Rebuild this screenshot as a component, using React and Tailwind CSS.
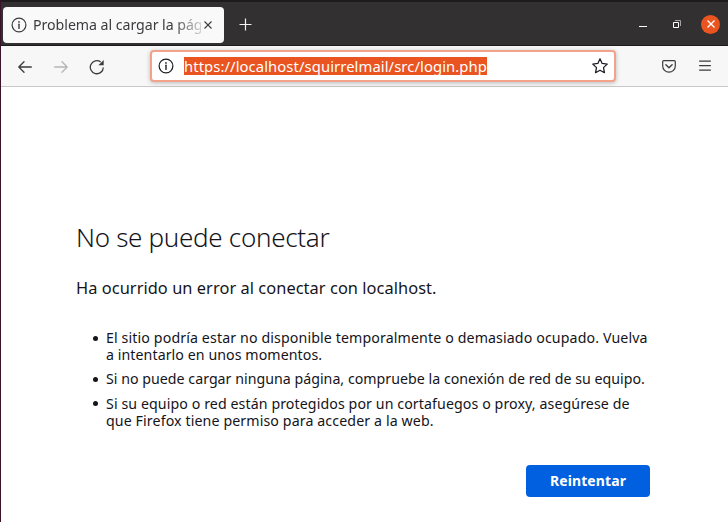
function InfoIcon({ className }) {
  return (
    <svg className={className} width="16" height="16" viewBox="0 0 16 16" fill="none" stroke="currentColor">
      <circle cx="8" cy="8" r="6.9" strokeWidth="1.2" />
      <path d="M8 7.3v4.1" strokeWidth="1.4" strokeLinecap="round" />
      <circle cx="8" cy="4.9" r="0.85" fill="currentColor" stroke="none" />
    </svg>
  );
}

function TabStrip() {
  return (
    <header className="flex h-[46px] shrink-0 items-center border-t-2 border-b border-t-[#1d1c1c] border-b-[#1c1a1b] bg-[#323031]">
      <div className="mt-[3px] ml-[2px] flex h-9 w-[221px] items-center rounded bg-[#f9f9fa] pl-2 text-[#3c3b3d]">
        <InfoIcon className="shrink-0" />
        <div className="ml-[6px] w-[168px] overflow-hidden text-[14.2px] leading-5 tracking-[-0.05px] whitespace-nowrap [mask-image:linear-gradient(to_right,#000_140px,transparent_175px)]">
          Problema al cargar la página
        </div>
        <svg className="ml-[3px] shrink-0" width="8" height="8" viewBox="0 0 8 8" stroke="currentColor" strokeWidth="1.1">
          <path d="M.5.5l7 7M7.5.5l-7 7" />
        </svg>
      </div>
      <svg className="mt-[2px] ml-[15px]" width="13" height="13" viewBox="0 0 13 13" stroke="#f4f4f4" strokeWidth="1.2">
        <path d="M6.5 .5v12M.5 6.5h12" />
      </svg>
      <div className="flex-1" />
      <div className="mt-[5px] h-px w-2 bg-white" />
      <svg className="mt-[2px] ml-[26px]" width="9" height="9" viewBox="0 0 9 9" fill="none">
        <path d="M2 .5h5.5V6" stroke="#a5a3a4" />
        <path d="M.5 2.5h5v5h-5z" stroke="#fff" />
      </svg>
      <div className="mt-px mr-[8px] ml-[19px] flex size-[19px] items-center justify-center rounded-full bg-[#e95420]">
        <svg width="8" height="8" viewBox="0 0 8 8" stroke="#fff" strokeWidth="1.4">
          <path d="M.5.5l7 7M7.5.5l-7 7" />
        </svg>
      </div>
    </header>
  );
}

function Toolbar() {
  return (
    <nav className="flex h-[41px] shrink-0 items-center border-b border-[#c8c8c8] bg-[#f7f7f7] text-[#3c3b3d]">
      <svg className="mt-px ml-[17px]" width="14" height="12" viewBox="0 0 14 12" fill="none" stroke="currentColor" strokeWidth="1.3" strokeLinecap="round" strokeLinejoin="round">
        <path d="M13.3 6H.8M6 .8L.8 6L6 11.2" />
      </svg>
      <svg className="mt-px ml-[22px] text-[#b5b5b6]" width="14" height="12" viewBox="0 0 14 12" fill="none" stroke="currentColor" strokeWidth="1.3" strokeLinecap="round" strokeLinejoin="round">
        <path d="M.7 6h12.5M8 .8L13.2 6L8 11.2" />
      </svg>
      <svg className="mt-px ml-[21px]" width="16" height="16" viewBox="0 0 16 16" fill="none" stroke="currentColor" strokeWidth="1.3">
        <path d="M14.3 8.4A6.5 6.5 0 1 1 11.7 3" />
        <path d="M14.7 1v5.2H9.4z" fill="currentColor" stroke="none" />
      </svg>
      <div className="ml-[45px] flex h-8 w-[466px] items-center rounded border-2 border-[#f3a389] bg-white pr-[6px] pl-[6px] text-[#1c1b22] shadow-[0_1px_4px_rgba(0,0,0,0.25)]">
        <InfoIcon className="shrink-0" />
        <div className="ml-[10px] h-[18px] w-[303px] bg-[#e95420] text-[14.8px] leading-[18px] tracking-[0.085px] whitespace-nowrap text-white">
          https://localhost/squirrelmail/src/login.php
        </div>
        <svg className="ml-auto" width="16" height="16" viewBox="0 0 16 16" fill="none" stroke="currentColor" strokeWidth="1.25" strokeLinejoin="round">
          <path d="M8 .8l2.15 4.65 5.1.65-3.75 3.5.95 5.1L8 12.2l-4.45 2.5.95-5.1L.75 6.1l5.1-.65z" />
        </svg>
      </div>
      <svg className="ml-[46px]" width="14" height="13" viewBox="0 0 14 13" fill="none" stroke="currentColor" strokeWidth="1.2" strokeLinecap="round" strokeLinejoin="round">
        <path d="M1.8.7h10.4a1.1 1.1 0 0 1 1.1 1.1v4.1a6.3 6.3 0 0 1-12.6 0V1.8A1.1 1.1 0 0 1 1.8.7z" />
        <path d="M3.9 4.8L7 7.7l3.1-2.9" strokeWidth="1.4" />
      </svg>
      <svg className="-mt-px ml-[23px]" width="12" height="11" viewBox="0 0 12 11" stroke="currentColor" strokeWidth="1.25" strokeLinecap="round">
        <path d="M.6 1h10.8M.6 5.5h10.8M.6 10h10.8" />
      </svg>
    </nav>
  );
}

function Reason({ children }) {
  return (
    <li className="flex">
      <span className="mt-[6.5px] mr-[8px] size-[5px] shrink-0 rounded-full bg-[#15141a]" />
      <div>{children}</div>
    </li>
  );
}

export default function App() {
  return (
    <div className="flex h-[522px] w-[728px] flex-col overflow-hidden border-l border-[#3b1229] bg-white font-['Noto_Sans','Open_Sans',sans-serif] text-[#15141a]">
      <TabStrip />
      <Toolbar />
      <main className="flex flex-col pt-[132px] pl-[75px]">
        <h1 className="text-[26px] leading-9 font-light tracking-[-0.3px] whitespace-nowrap">
          No se puede conectar
        </h1>
        <p className="mt-[21px] text-[16.4px] leading-6 tracking-[0.05px] whitespace-nowrap">
          Ha ocurrido un error al conectar con localhost.
        </p>
        <ul className="mt-[29px] flex flex-col gap-[7px] pl-[17px] text-[14.2px] leading-[17.2px] whitespace-nowrap">
          <Reason>
            <div className="tracking-[0.12px]">El sitio podría estar no disponible temporalmente o demasiado ocupado. Vuelva</div>
            <div className="tracking-[0.07px]">a intentarlo en unos momentos.</div>
          </Reason>
          <Reason>
            <div className="tracking-[0.02px]">Si no puede cargar ninguna página, compruebe la conexión de red de su equipo.</div>
          </Reason>
          <Reason>
            <div className="tracking-[0.09px]">Si su equipo o red están protegidos por un cortafuegos o proxy, asegúrese de</div>
            <div className="tracking-[0.11px]">que Firefox tiene permiso para acceder a la web.</div>
          </Reason>
        </ul>
        <button className="mt-[36px] ml-[450px] h-8 w-[124px] rounded bg-[#0060df] pb-px text-[14px] font-bold tracking-[0.1px] text-white">
          Reintentar
        </button>
      </main>
    </div>
  );
}
